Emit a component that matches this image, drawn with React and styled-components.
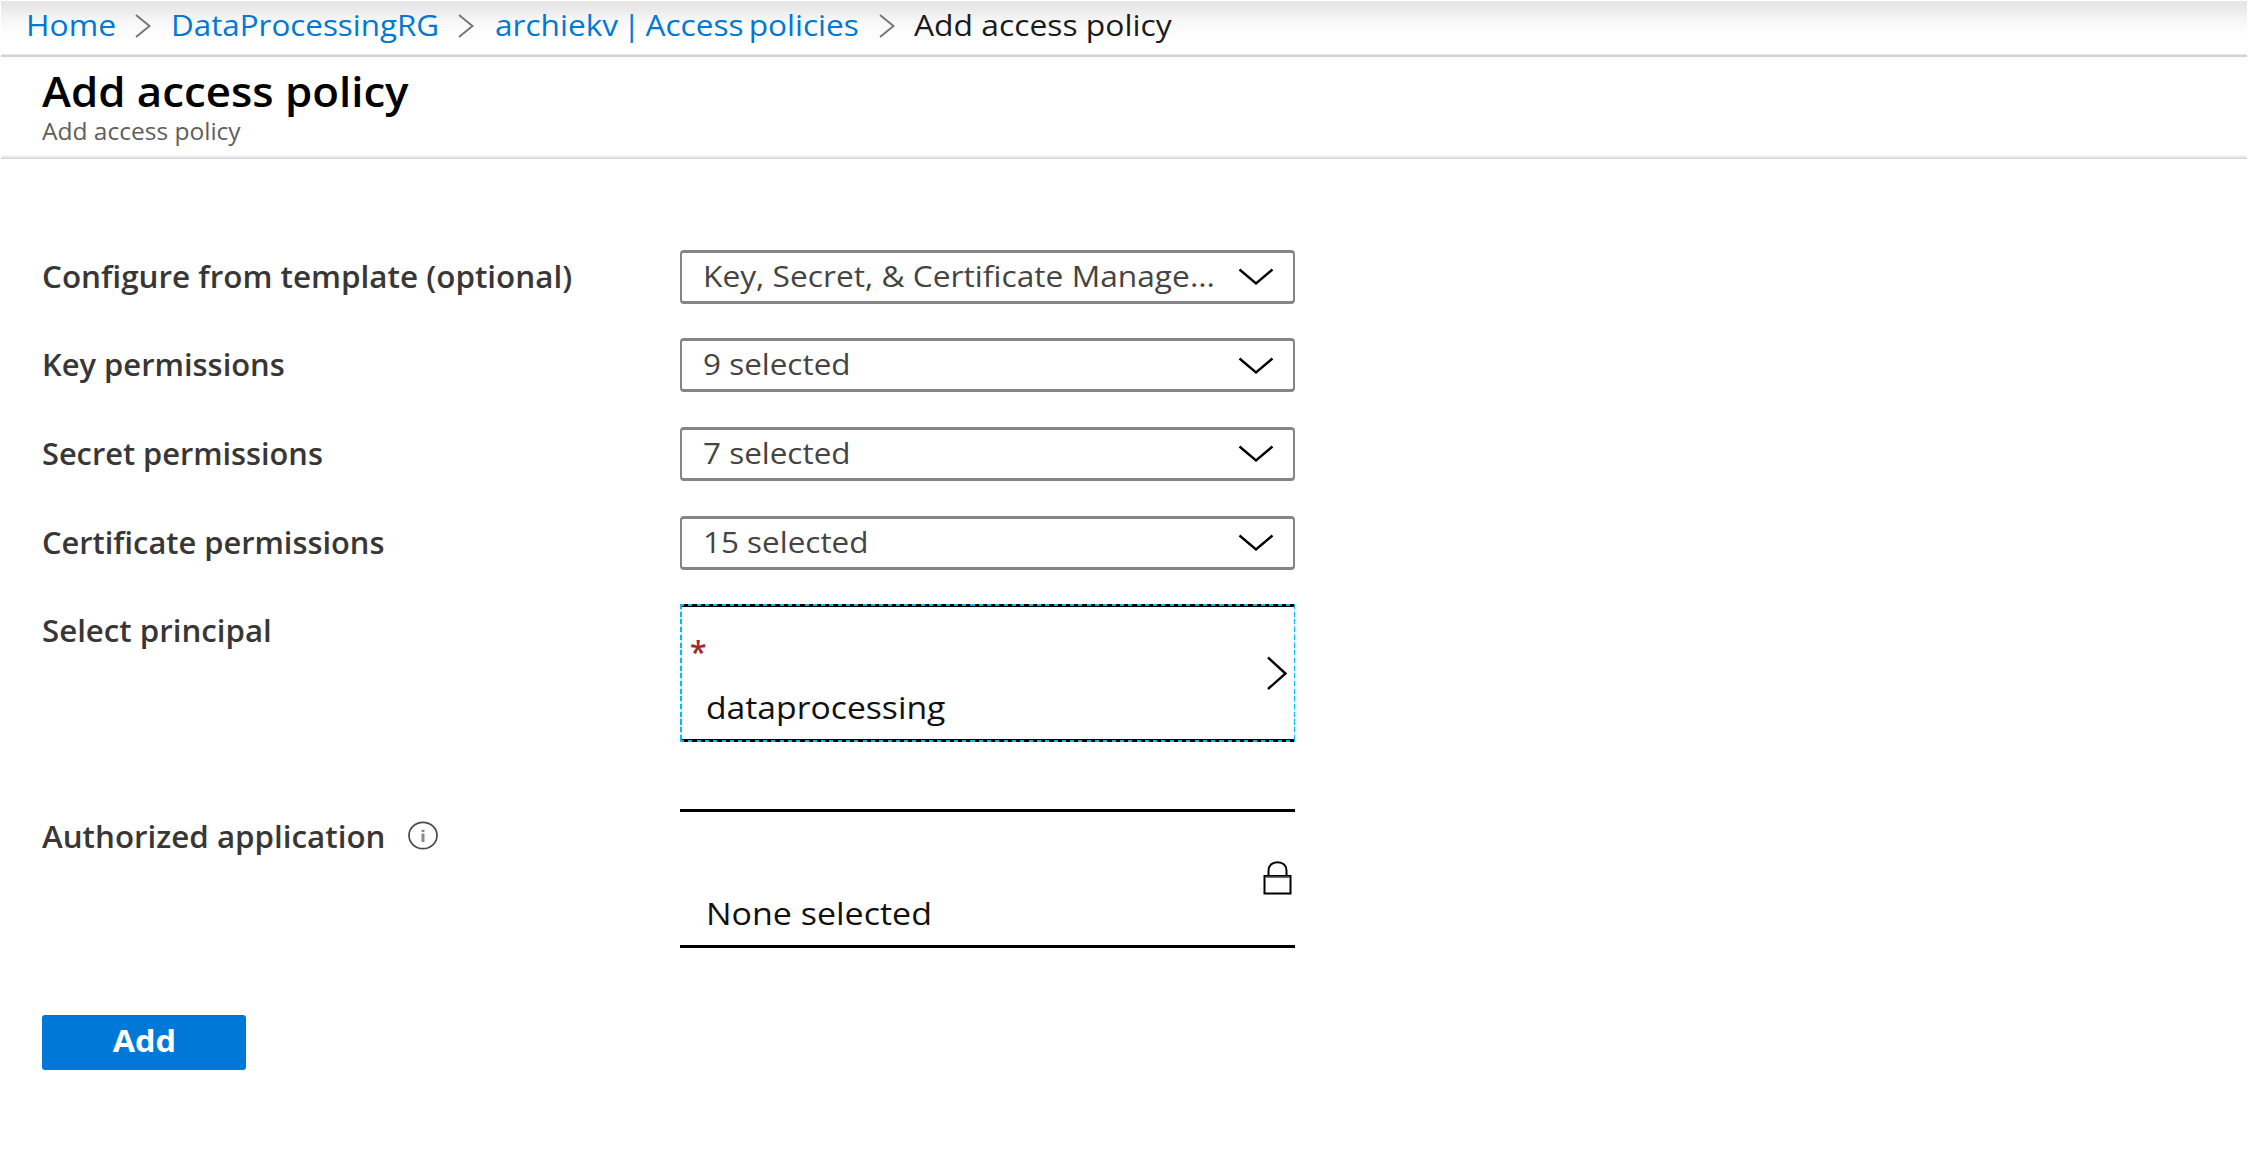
import React from "react";
import styled, { createGlobalStyle } from "styled-components";

const GlobalStyle = createGlobalStyle`
  * { box-sizing: border-box; }
  body {
    margin: 0;
    background: #fff;
    font-family: "Open Sans", "Noto Sans", sans-serif;
  }
`;

const Page = styled.main`
  width: 2247px;
  height: 1170px;
  padding: 1px 0 0 1px;
  overflow: hidden;
`;

const Stretch = styled.span`
  display: inline-block;
  white-space: pre;
  word-spacing: ${(p) => p.$word || 0}px;
  transform: scaleX(${(p) => p.$x || 1.045});
  transform-origin: ${(p) => p.$origin || "left"} center;
`;

const Breadcrumb = styled.nav`
  display: flex;
  height: 56px;
  padding-left: 25px;
  font-size: 30px;
  line-height: 47px;
  background: linear-gradient(#e6e6e6 0, #e8e8e8 6px, #f7f7f7 20px, #fdfdfd 32px, #fff 42px);
  border-bottom: 2px solid #d4d4d4;
  box-shadow: inset 0 -1px 0 #e8e8e8;
`;

const Crumb = styled.a`
  flex: none;
  width: ${(p) => p.$width}px;
  color: ${(p) => (p.$current ? "#1b1b1b" : "#0078d4")};
  text-decoration: none;
`;

const CrumbArrow = styled.svg`
  flex: none;
  width: 16px;
  height: 24px;
  margin: 12.5px ${(p) => p.$gap}px 0 0;
`;

const Header = styled.header`
  height: 102px;
  padding-left: 41px;
  border-bottom: 1px solid #d4d4d4;
  box-shadow: inset 0 -2px 0 #e8e8e8;
`;

const Title = styled.h1`
  margin: 0;
  padding-top: 9px;
  color: #000;
  font-size: 41px;
  font-weight: 600;
  line-height: 50px;
`;

const Subtitle = styled.p`
  margin: 0;
  color: #605e5c;
  font-size: 23px;
  line-height: 31px;
`;

const Form = styled.form`
  display: grid;
  grid-template-columns: 638px 615px;
  row-gap: 34.55px;
  padding: 90.9px 0 0 41px;
`;

const Label = styled.label`
  display: flex;
  align-items: center;
  height: 53px;
  margin-top: ${(p) => p.$top || 0}px;
  color: #383736;
  font-size: 30px;
  font-weight: 600;
`;

const InfoIcon = styled.svg`
  width: 30px;
  height: 29px;
  margin: 0 0 2px 37px;
`;

const Select = styled.div`
  display: flex;
  justify-content: space-between;
  height: 54px;
  padding: 0 19px 0 21px;
  border: 3px solid #858585;
  border-left-width: 2px;
  border-right-width: 2px;
  border-radius: 4px;
  color: #454443;
  font-size: 30px;
  line-height: 46.5px;
`;

const ChevronDown = styled.svg`
  width: 36px;
  height: 18px;
  margin-top: 15.5px;
`;

const Picker = styled.div`
  display: flex;
  justify-content: space-between;
  height: 139px;
  margin-top: ${(p) => p.$top || 0}px;
  border-top: 3px solid #000;
  border-bottom: 3px solid #000;
  color: #111;
`;

const FocusedPicker = styled(Picker)`
  height: 138px;
  border: 0;
  padding: 3px 0;
  background:
    repeating-linear-gradient(90deg, #00bcf2 0 4px, transparent 4px 8.3px) 0 0 / 100% 2px no-repeat,
    repeating-linear-gradient(90deg, #00bcf2 0 4px, transparent 4px 8.3px) 0 100% / 100% 2px no-repeat,
    repeating-linear-gradient(180deg, #00bcf2 0 5px, #c5f0fc 5px 7.7px) 0 0 / 2px 100% no-repeat,
    repeating-linear-gradient(180deg, #00bcf2 0 5px, #c5f0fc 5px 7.7px) 100% 0 / 1px 100% no-repeat,
    linear-gradient(#000, #000) 2px 0 / 612px 3px no-repeat,
    linear-gradient(#000, #000) 2px 100% / 612px 3px no-repeat;
`;

const PickerText = styled.div`
  display: flex;
  flex-direction: column;
  justify-content: flex-end;
  padding: 0 0 ${(p) => p.$bottom}px 10px;
`;

const Required = styled.span`
  height: 55px;
  color: #a4262c;
  font-size: 30px;
  font-weight: 600;
  line-height: 40px;
`;

const PickerValue = styled.span`
  padding-left: 15.5px;
  font-size: 31px;
  line-height: 40px;
`;

const ChevronRight = styled.svg`
  width: 22px;
  height: 34px;
  margin: 49px 7px 0 0;
`;

const LockIcon = styled.svg`
  width: 29px;
  height: 34px;
  margin: 49px 3px 0 0;
`;

const AddButton = styled.button`
  display: block;
  width: 204px;
  height: 55px;
  margin: 67px 0 0 41px;
  padding: 0 0 4px;
  border: 0;
  border-radius: 3px;
  background: #0078d7;
  color: #fff;
  font: 700 30px "Open Sans", sans-serif;
  line-height: 50px;
`;

function Separator({ gap }) {
  return (
    <CrumbArrow $gap={gap} viewBox="0 0 16 24" fill="none" stroke="#767676" strokeWidth="2">
      <path d="M1 1L14.5 12L1 23" />
    </CrumbArrow>
  );
}

function PermissionRow({ label, value, labelX, valueX }) {
  return (
    <>
      <Label><Stretch $x={labelX}>{label}</Stretch></Label>
      <Select>
        <Stretch $x={valueX}>{value}</Stretch>
        <ChevronDown viewBox="0 0 36 18" fill="none" stroke="#000" strokeWidth="2.4">
          <path d="M1.5 1.5L18 15.5L34.5 1.5" />
        </ChevronDown>
      </Select>
    </>
  );
}

const ROWS = [
  { label: "Configure from template (optional)", value: "Key, Secret, & Certificate Manage...", labelX: 1.047, valueX: 1.057 },
  { label: "Key permissions", value: "9 selected", labelX: 1.03, valueX: 1.048 },
  { label: "Secret permissions", value: "7 selected", labelX: 1.025, valueX: 1.048 },
  { label: "Certificate permissions", value: "15 selected", labelX: 1.027, valueX: 1.048 },
];

export default function App() {
  return (
    <Page>
      <GlobalStyle />
      <Breadcrumb>
        <Crumb $width={109}><Stretch $x={1.062}>Home</Stretch></Crumb>
        <Separator gap={20} />
        <Crumb $width={286.5}><Stretch $x={1.045}>DataProcessingRG</Stretch></Crumb>
        <Separator gap={21} />
        <Crumb $width={384.5}><Stretch $x={1.053} $word={-3}>archiekv | Access policies</Stretch></Crumb>
        <Separator gap={18.5} />
        <Crumb $width={270} $current><Stretch $x={1.06}>Add access policy</Stretch></Crumb>
      </Breadcrumb>
      <Header>
        <Title><Stretch $x={1.068}>Add access policy</Stretch></Title>
        <Subtitle><Stretch $x={1.066}>Add access policy</Stretch></Subtitle>
      </Header>
      <Form>
        {ROWS.map((row) => <PermissionRow key={row.label} {...row} />)}
        <Label><Stretch $x={1.041}>Select principal</Stretch></Label>
        <FocusedPicker>
          <PickerText $bottom={12}>
            <Required>*</Required>
            <PickerValue><Stretch $x={1.087}>dataprocessing</Stretch></PickerValue>
          </PickerText>
          <ChevronRight viewBox="0 0 22 34" fill="none" stroke="#000" strokeWidth="2.4">
            <path d="M2 1.5L19.5 17.5L2 33" />
          </ChevronRight>
        </FocusedPicker>
        <Label $top={33.6}>
          <Stretch $x={1.044}>Authorized application</Stretch>
          <InfoIcon viewBox="0 0 30 29" fill="none" stroke="#4a4a4a" strokeWidth="1.7">
            <ellipse cx="15" cy="14.5" rx="14" ry="13.2" />
            <path d="M15 12.5V21M15 8.7V11" stroke="#8a8a8a" strokeWidth="3" />
          </InfoIcon>
        </Label>
        <Picker $top={32.4}>
          <PickerText $bottom={12}>
            <PickerValue><Stretch $x={1.096}>None selected</Stretch></PickerValue>
          </PickerText>
          <LockIcon viewBox="0 0 29 34" fill="none" stroke="#000" strokeWidth="2">
            <path d="M5.5 14V10C5.5 4.5 9 1.3 14.5 1.3S23.5 4.5 23.5 10V14" />
            <rect x="1.5" y="15" width="26" height="17.5" />
            <path d="M2.5 16.2H26.5" stroke="#6e6e6e" strokeWidth="1.6" />
          </LockIcon>
        </Picker>
      </Form>
      <AddButton type="button"><Stretch $x={1.08} $origin="center">Add</Stretch></AddButton>
    </Page>
  );
}
